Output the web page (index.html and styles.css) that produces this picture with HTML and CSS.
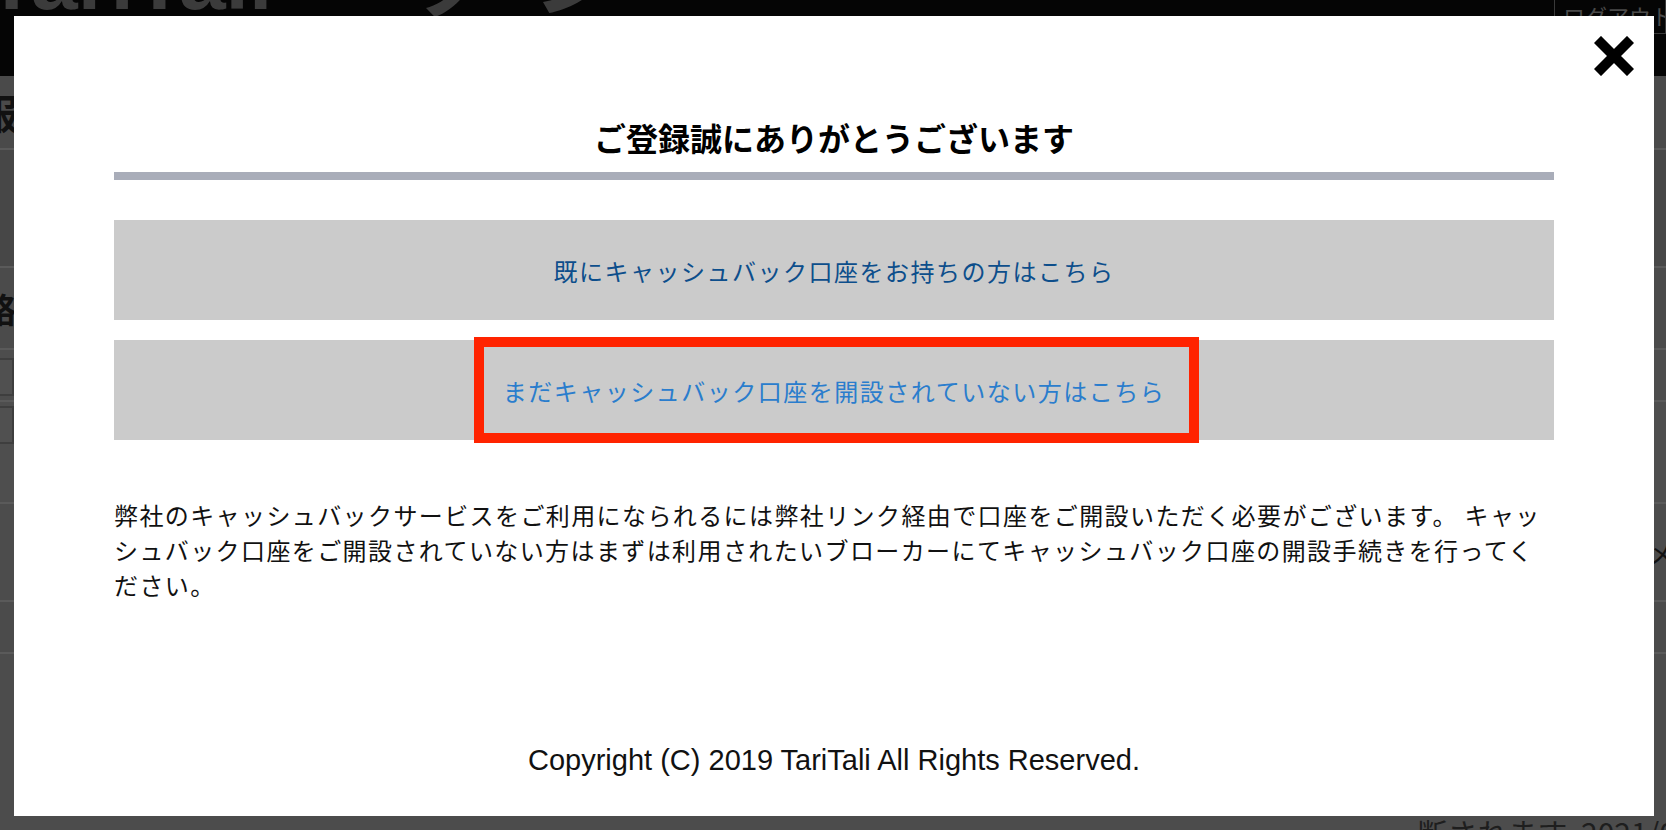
FILE: index.html
```html
<!DOCTYPE html>
<html lang="ja">
<head>
<meta charset="utf-8">
<title>ご登録誠にありがとうございます</title>
<link rel="stylesheet" href="styles.css">
</head>
<body>
<div class="page">
  <header class="topbar">
    <div class="logo">TariTali ー ッ  ジ</div>
    <div class="logout">ログアウト</div>
  </header>
  <div class="bgrow r1"><span class="bgchar">服</span></div>
  <div class="bgrow r2"></div>
  <div class="bgrow r3"><span class="bgchar small">略</span></div>
  <div class="bgrow r4"><span class="bgbox"></span></div>
  <div class="bgrow r5"><span class="bgbox"></span></div>
  <div class="bgrow r6"><span class="bgside">メ</span></div>
  <div class="bgrow r7"></div>
  <div class="bgfoot">断されます&nbsp;&nbsp;2021/0</div>
</div>

<div class="modal">
  <svg class="close" viewBox="0 0 40 40" aria-label="閉じる">
    <path d="M7 7L33 33M33 7L7 33" stroke="#000" stroke-width="10" stroke-linecap="square" fill="none"/>
  </svg>
  <h1 class="title">ご登録誠にありがとうございます</h1>
  <div class="divider"></div>
  <div class="buttons">
    <a class="btn btn1" href="#">既にキャッシュバック口座をお持ちの方はこちら</a>
    <a class="btn btn2" href="#">まだキャッシュバック口座を開設されていない方はこちら<span class="highlight"></span></a>
  </div>
  <p class="note">弊社のキャッシュバックサービスをご利用になられるには弊社リンク経由で口座をご開設いただく必要がございます。 キャッシュバック口座をご開設されていない方はまずは利用されたいブローカーにてキャッシュバック口座の開設手続きを行ってください。</p>
  <div class="footer">Copyright (C) 2019 TariTali All Rights Reserved.</div>
</div>
</body>
</html>
```

FILE: styles.css
```css
html, body {
  margin: 0;
  padding: 0;
  width: 1666px;
  height: 830px;
  overflow: hidden;
}

body {
  background: #4c4c4c;
  font-family: "Noto Sans CJK JP", "Noto Sans", sans-serif;
  position: relative;
}

.page {
  height: 830px;
  display: flex;
  flex-direction: column;
}

.topbar {
  height: 76px;
  flex: none;
  background: #050505;
  display: flex;
  justify-content: space-between;
  align-items: flex-start;
  overflow: hidden;
}

.logo {
  font-family: "Liberation Sans", "Noto Sans CJK JP", sans-serif;
  font-weight: bold;
  font-size: 84px;
  line-height: 1;
  color: #3b3b3b;
  margin-top: -62px;
  margin-left: -14px;
  white-space: pre;
}

.logout {
  width: 112px;
  height: 34px;
  box-sizing: border-box;
  border: 1px solid #3a3a3a;
  border-top: none;
  color: #4a4a4a;
  font-size: 22px;
  line-height: 30px;
  padding-left: 8px;
  white-space: nowrap;
  overflow: hidden;
}

.bgrow {
  border-bottom: 2px solid #5a5a5a;
  display: flex;
  align-items: center;
  overflow: hidden;
}

.r1 { height: 72px; background: #4a4a4a; }
.r2 { height: 116px; background: #474747; }
.r3 { height: 80px; background: #4b4b4b; }
.r4 { height: 50px; background: #4d4d4d; }
.r5 { height: 100px; background: #4e4e4e; align-items: flex-start; }
.r6 { height: 96px; background: #4c4c4c; justify-content: flex-end; }
.r7 { height: 50px; background: #4b4b4b; }

.bgchar {
  font-size: 40px;
  font-weight: bold;
  color: #111;
  margin-left: -22px;
}

.bgchar.small {
  font-size: 34px;
  margin-left: -18px;
}

.bgbox {
  width: 20px;
  height: 34px;
  margin-left: -10px;
  margin-top: 4px;
  border: 2px solid #3e3e3e;
  background: #505050;
}

.bgside {
  font-size: 26px;
  color: #111;
  margin-right: -8px;
}

.bgfoot {
  margin-top: auto;
  height: 16px;
  overflow: hidden;
  text-align: right;
  font-size: 30px;
  line-height: 36px;
  color: #1e1e1e;
  margin-right: -10px;
  white-space: nowrap;
}

/* Modal */
.modal {
  position: absolute;
  left: 14px;
  top: 16px;
  width: 1640px;
  height: 800px;
  box-sizing: border-box;
  padding: 98px 100px 39px;
  background: #ffffff;
  display: flex;
  flex-direction: column;
}

.close {
  position: absolute;
  top: 20px;
  right: 20px;
  width: 40px;
  height: 40px;
}

.title {
  margin: 0;
  font-size: 32px;
  font-weight: bold;
  line-height: 46px;
  letter-spacing: 0;
  text-align: center;
  color: #000;
}

.divider {
  height: 8px;
  margin-top: 12px;
  background: #a9adb9;
}

.buttons {
  display: flex;
  flex-direction: column;
  gap: 20px;
  margin-top: 40px;
}

.btn {
  position: relative;
  height: 100px;
  background: #cbcbcb;
  display: flex;
  align-items: center;
  justify-content: center;
  font-size: 24px;
  letter-spacing: 1.5px;
  text-decoration: none;
}

.btn1 { color: #0d4e8b; }
.btn2 { color: #2a7dcd; }

.highlight {
  position: absolute;
  left: 360px;
  top: -3px;
  width: 725px;
  height: 106px;
  box-sizing: border-box;
  border: 10px solid #ff2300;
}

.note {
  margin: 57px 0 0;
  font-size: 24px;
  line-height: 35px;
  letter-spacing: 1.4px;
  color: #111;
}

.footer {
  margin-top: auto;
  text-align: center;
  font-family: "Liberation Sans", Arial, sans-serif;
  font-size: 29px;
  line-height: 34px;
  color: #111;
}
```
